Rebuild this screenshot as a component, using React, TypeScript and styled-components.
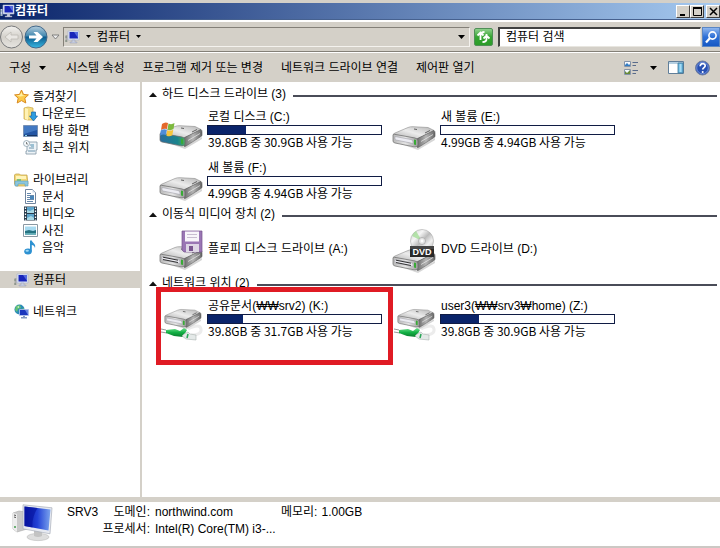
import React from "react";
import styled, { createGlobalStyle } from "styled-components";

const face = "#d4d0c8";
const navy = "#0a246a";

const GlobalStyle = createGlobalStyle`
  * { box-sizing: border-box; }
  body {
    margin: 0;
    background: #fff;
    color: #000;
    font: 12px/16px "Liberation Sans", "Noto Sans CJK KR", sans-serif;
  }
  button, input { font: inherit; color: inherit; }
`;

const Window = styled.div`
  display: flex;
  flex-direction: column;
  min-height: 100vh;
  overflow: hidden;
  background: ${face};
`;

/* Title bar */

const TitleBar = styled.header`
  display: flex;
  align-items: center;
  height: 17px;
  margin-top: 3px;
  background: linear-gradient(90deg, ${navy}, #a6caf0);
  border-bottom: 1px solid #46618f;
  overflow: hidden;
`;

const WindowTitle = styled.h1`
  flex: 1;
  margin: 0;
  color: #fff;
  font-size: 12px;
  line-height: 16px;
`;

const WindowButton = styled.button<{ $gap?: boolean }>`
  display: grid;
  place-items: center;
  width: 14px;
  height: 13px;
  margin: 0 0 0 ${(p) => (p.$gap ? 2 : 0)}px;
  padding: 0;
  background: ${face};
  border: 1px solid;
  border-color: #fff #404040 #404040 #fff;
`;

/* Address row */

const AddressRow = styled.nav`
  display: flex;
  align-items: center;
  height: 32px;
  border-top: 2px solid #fff;
  border-bottom: 1px solid #848078;
`;

const RoundButton = styled.button`
  display: grid;
  padding: 0;
  background: none;
  border: 0;
`;

const PlainButton = styled.button<{ $width?: number }>`
  display: flex;
  align-items: center;
  justify-content: center;
  gap: 6px;
  width: ${(p) => (p.$width ? `${p.$width}px` : "auto")};
  padding: 0;
  background: none;
  border: 0;
  white-space: nowrap;
`;

const MenuButton = styled(PlainButton)`
  justify-content: flex-start;
  gap: 8px;
`;

const AddressBox = styled.div`
  display: flex;
  flex: 1;
  align-items: center;
  gap: 4px;
  height: 20px;
  padding: 0 4px 0 1px;
  border: 1px solid;
  border-color: #848078 #f4f2ee #f4f2ee #848078;
`;

const Spacer = styled.div`
  flex: 1;
`;

const RefreshButton = styled.button`
  display: grid;
  place-items: center;
  width: 19px;
  height: 18px;
  margin: 0 5px 0 4px;
  padding: 0;
  background: linear-gradient(#8fd08c, #35a431 50%, #2c9c28);
  border: 1px solid #4f8f57;
  border-radius: 2px;
`;

const SearchBox = styled.div`
  display: flex;
  width: 222px;
  height: 20px;
`;

const SearchInput = styled.input`
  flex: 1;
  min-width: 0;
  padding: 0 0 0 6px;
  background: #fff;
  border: 1px solid;
  border-width: 2px 1px 1px 2px;
  border-color: #404040 #e8e6e0 #e8e6e0 #404040;
  border-radius: 0;
  &::placeholder { color: #000; opacity: 1; }
`;

const SearchButton = styled.button`
  display: grid;
  place-items: center;
  width: 18px;
  margin-left: 1px;
  padding: 0;
  background: linear-gradient(#8fb6ee, #2d6fd6 50%, #1658c4);
  border: 1px solid #5a86c4;
`;

/* Command bar */

const CommandBar = styled.div`
  display: flex;
  align-items: center;
  gap: 18px;
  height: 30px;
  padding: 0 10px 0 9px;
  border-top: 1px solid #fff;
`;

const ViewTools = styled.div`
  display: flex;
  align-items: center;
  gap: 11px;
  margin-left: auto;
`;

/* Folder tree */

const Body = styled.div`
  display: flex;
  flex: 1;
  background: #fff;
`;

const Tree = styled.nav`
  display: flex;
  flex-direction: column;
  gap: 15px;
  width: 142px;
  flex: none;
  padding-top: 6px;
  border-right: 2px solid ${face};
`;

const TreeGroup = styled.ul`
  margin: 0;
  padding: 0;
  list-style: none;
`;

const TreeLink = styled.a<{ $child?: boolean; $active?: boolean }>`
  display: flex;
  align-items: center;
  gap: 4px;
  height: 17px;
  padding-left: ${(p) => (p.$child ? 23 : 14)}px;
  background: ${(p) => (p.$active ? face : "transparent")};
  color: inherit;
  text-decoration: none;
`;

/* Drive listing */

const Listing = styled.main`
  flex: 1;
  min-width: 0;
  padding: 4px 3px 0 7px;
`;

const Group = styled.section`
  margin-bottom: 1px;
`;

const GroupHeading = styled.h2`
  display: flex;
  align-items: center;
  gap: 5px;
  height: 17px;
  margin: 0;
  font-size: 12px;
  font-weight: 400;
  line-height: 17px;
  white-space: nowrap;
  &::after {
    content: "";
    flex: 1;
    height: 2px;
    margin: 2px 0 0 2px;
    background: #4a4c58;
  }
`;

const Tiles = styled.div`
  display: grid;
  grid-template-columns: repeat(2, 233px);
  padding-left: 9px;
`;

const Tile = styled.article<{ $marked?: boolean }>`
  position: relative;
  display: flex;
  align-items: center;
  gap: 3px;
  height: 51px;
  &::after {
    content: "";
    display: ${(p) => (p.$marked ? "block" : "none")};
    position: absolute;
    inset: -5px -2px -22px -2px;
    border: 5px solid #e01b24;
  }
`;

const TileText = styled.div`
  width: 175px;
  white-space: nowrap;
`;

const TileName = styled.div`
  padding-left: 1px;
`;

const Usage = styled.div`
  height: 10px;
  border: 1px solid #101c44;
  background: #fff;
`;

const UsageFill = styled.div<{ $percent: number }>`
  width: ${(p) => p.$percent}%;
  height: 100%;
  background: ${navy};
`;

const Capacity = styled.div`
  padding-left: 1px;
  font-family: "Noto Sans CJK KR", sans-serif;
  line-height: 13px;
`;

/* Details pane */

const Details = styled.footer`
  display: flex;
  align-items: flex-start;
  height: 51px;
  padding: 2px 0 0 12px;
  background: #fff;
  border-top: 5px solid ${face};
  border-bottom: 2px solid #ccc8c4;
  white-space: nowrap;
`;

const HostName = styled.strong`
  width: 35px;
  margin-left: 13px;
  font-weight: 400;
  line-height: 17px;
`;

const Facts = styled.dl`
  display: grid;
  grid-template-columns: 48px 121px auto;
  column-gap: 5px;
  margin: 0;
  line-height: 17px;
  dd, dt { margin: 0; }
  dt { text-align: right; }
`;

const Fact = styled.div`
  display: flex;
  gap: 4px;
`;

const FactRow = styled.div`
  display: contents;
`;

/* Icons */

const Caret = () => (
  <svg width="7" height="4" viewBox="0 0 7 4" aria-hidden="true"><path d="M0 0h7L3.5 4z" fill="#000" /></svg>
);

const SmallCaret = () => (
  <svg width="5" height="3" viewBox="0 0 5 3" aria-hidden="true"><path d="M0 0h5L2.5 3z" fill="#000" /></svg>
);

const Collapse = () => (
  <svg width="8" height="5" viewBox="0 0 8 5" aria-hidden="true"><path d="M0 5h8L4 .5z" fill="#111" /></svg>
);

const ComputerIcon = ({ light = false }: { light?: boolean }) => (
  <svg width="15" height="14" viewBox="0 0 15 14" aria-hidden="true">
    <path d="M.5 5h2v7h-2z" fill={light ? "#c8d4ec" : "#a8a8a8"} />
    <path d="M.5 7h1M.5 11h1" stroke="#406040" />
    <path d="M3 1h11v9H3z" fill="#dfe5f5" stroke="#a4aecb" strokeWidth=".6" />
    <path d="M4.5 2H13v6.5H4.5z" fill="#1825ba" />
    <path d="M9 2h4v6z" fill="#5369dc" />
    <path d="M7 10h3v2h2v1H5v-1h2z" fill="#c7cfe2" stroke="#8d96af" strokeWidth=".4" />
  </svg>
);

const BackIcon = () => (
  <svg width="24" height="24" viewBox="0 0 24 24" aria-hidden="true">
    <defs><linearGradient id="back" x2="0" y2="1"><stop stopColor="#f3f2ef" /><stop offset=".5" stopColor="#d4d1cb" /><stop offset="1" stopColor="#e7e5e1" /></linearGradient></defs>
    <circle cx="11.5" cy="12" r="11" fill="url(#back)" stroke="#77787a" />
    <path d="M5 12l6-5v3h7v4h-7v3z" fill="#e9e7e3" stroke="#bdbab4" strokeWidth=".8" />
  </svg>
);

const ForwardIcon = () => (
  <svg width="24" height="24" viewBox="0 0 24 24" aria-hidden="true">
    <defs><linearGradient id="fwd" x2="0" y2="1"><stop stopColor="#b5cddd" /><stop offset=".45" stopColor="#4389b0" /><stop offset=".5" stopColor="#0c5a8c" /><stop offset="1" stopColor="#39b9e4" /></linearGradient></defs>
    <circle cx="12" cy="12" r="11" fill="url(#fwd)" stroke="#44698a" />
    <path d="M5 10.5h7.5L9.5 7h4l5.5 5-5.5 5h-4l3-3.500H5z" fill="#fff" />
  </svg>
);

const HistoryIcon = () => (
  <svg width="9" height="6" viewBox="0 0 9 6" aria-hidden="true"><path d="M1 1h7L4.500 5z" fill="#eee" stroke="#777" strokeWidth=".9" /></svg>
);

const RefreshIcon = () => (
  <svg width="17" height="14" viewBox="0 0 17 14" fill="none" stroke="#fff" strokeWidth="1.8" aria-hidden="true">
    <path d="M5.500 10V5c0-2 1.500-3 4-3M2.500 5.500l3-3 3 3M11.500 4v5c0 2-1.500 3-4 3M8.500 8.500l3-3 3 3" />
  </svg>
);

const SearchIcon = () => (
  <svg width="14" height="14" viewBox="0 0 14 14" fill="none" stroke="#fff" aria-hidden="true">
    <circle cx="8.500" cy="5.500" r="3.600" strokeWidth="1.600" /><path d="M6 8l-4 4.500" strokeWidth="2.200" />
  </svg>
);

const ViewIcon = () => (
  <svg width="16" height="16" viewBox="0 0 16 16" aria-hidden="true">
    <path d="M1.500 1.500h6v5h-6zM1.500 9.500h6v5h-6z" fill="#f5f9ff" stroke="#8493a8" />
    <path d="M2 5l2-2 2 2 1-1v2H2z" fill="#347dc4" />
    <path d="M2 11l2 2 3-3v4H2z" fill="#688a38" />
    <path d="M9.500 2.500H15M9.500 5.500H13M9.500 10.500H15M9.500 13.500H13" stroke="#596b8b" />
  </svg>
);

const PreviewIcon = () => (
  <svg width="16" height="15" viewBox="0 0 16 15" aria-hidden="true">
    <path d="M.5 1.500h15v12H.5z" fill="#fff" stroke="#607e99" />
    <path d="M1 2h14v2H1z" fill="#b5cfe1" />
    <path d="M10 3h5v10h-5z" fill="#65b5df" stroke="#437897" strokeWidth=".8" />
    <path d="M11.500 4h2v8h-2z" fill="#a7dcf4" />
  </svg>
);

const HelpIcon = () => (
  <svg width="15" height="16" viewBox="0 0 15 16" aria-hidden="true">
    <circle cx="7.500" cy="8" r="7" fill="#2850b2" stroke="#6f7d9d" />
    <circle cx="7.500" cy="8" r="5.800" fill="none" stroke="#8fa9e8" strokeWidth=".7" />
    <path d="M5.200 6.300c0-3.600 5-3.300 5-.5 0 1.800-2.500 1.800-2.500 3.800" fill="none" stroke="#fff" strokeWidth="1.700" />
    <circle cx="7.700" cy="12" r="1" fill="#fff" />
  </svg>
);

const StarIcon = () => (
  <svg width="15" height="15" viewBox="0 0 15 15" aria-hidden="true">
    <path d="M7.500 1l2 4.400 4.900.5-3.600 3.300 1 4.800-4.300-2.400L3.200 14l1-4.800L.6 5.900l4.900-.5z" fill="#fcca4b" stroke="#d98a21" />
    <path d="M7.500 3l1 3.300 3 .5-5.500.7-3.500-1L6 6z" fill="#fff1a5" />
  </svg>
);

const DownloadIcon = () => (
  <svg width="15" height="16" viewBox="0 0 15 16" aria-hidden="true">
    <path d="M1 2l4-1 5 1v12H5l-4-1z" fill="#f4dc83" stroke="#c9a544" strokeWidth=".7" />
    <path d="M2 2l3 1v11l-3-1z" fill="#fff2b5" />
    <path d="M8.500 6h4v4h2l-4 5-4-5h2z" fill="#2d9de0" stroke="#1766a8" strokeWidth=".7" />
  </svg>
);

const DesktopIcon = () => (
  <svg width="15" height="14" viewBox="0 0 15 14" aria-hidden="true">
    <path d="M.5 1.500h14v11H.5z" fill="#2456a4" stroke="#7891b4" />
    <path d="M1 2h13v4L1 10z" fill="#4379c2" /><path d="M1 11h13v1H1z" fill="#173565" />
    <path d="M2 11.500h2" stroke="#8ed7ed" />
  </svg>
);

const RecentIcon = () => (
  <svg width="15" height="15" viewBox="0 0 15 15" aria-hidden="true">
    <path d="M4 2h10v8h-1v4H3v-3h1z" fill="#edf3f7" stroke="#8095a3" strokeWidth=".8" />
    <path d="M7 5h4M6 8h5M5 11h7" stroke="#6d94ad" /><path d="M8 4v3h3V4z" fill="#9bc0d3" />
    <circle cx="3.500" cy="3.500" r="3" fill="#f6fafc" stroke="#8095a3" strokeWidth=".7" />
    <path d="M3.500 2v2h1.500" fill="none" stroke="#555" strokeWidth=".7" />
  </svg>
);

const LibraryIcon = () => (
  <svg width="15" height="14" viewBox="0 0 15 14" aria-hidden="true">
    <path d="M.5 2l1-1h4l1 1h6.500l1 9-2 2h-10L.5 11z" fill="#f2d777" stroke="#bd9c44" strokeWidth=".7" />
    <path d="M2 3h10v3H2z" fill="#fff4b9" /><path d="M3 6h4v4H3z" fill="#7fc27a" />
    <path d="M1 8h13v5h-3v-2H4v2H1z" fill="#8bc6de" stroke="#5d9fb9" strokeWidth=".6" />
  </svg>
);

const DocumentIcon = () => (
  <svg width="15" height="15" viewBox="0 0 15 15" aria-hidden="true">
    <path d="M2.500.5h7l3 3v11h-10z" fill="#fff" stroke="#71859e" />
    <path d="M9.500.5v3h3z" fill="#ccd8e8" /><path d="M4 4.500h4M4 6.500h7M4 8.500h3M4 10.500h7M4 12.500h6" stroke="#6688ac" />
    <path d="M7 7h4v3H7z" fill="#4684b8" />
  </svg>
);

const VideoIcon = () => (
  <svg width="15" height="15" viewBox="0 0 15 15" aria-hidden="true">
    <path d="M1 .5h13v14H1z" fill="#273b4c" /><path d="M4 1h7v6H4zM4 8h7v6H4z" fill="#5da6ce" />
    <path d="M4 4l3 1 4-2v4H4zM4 12l4-2 3 2v2H4z" fill="#a9d9e6" />
    <path d="M2.500 1.500v13M12.500 1.500v13" stroke="#fff" strokeWidth="1.300" strokeDasharray="1.500 1.500" />
  </svg>
);

const PictureIcon = () => (
  <svg width="15" height="13" viewBox="0 0 15 13" aria-hidden="true">
    <path d="M.5.5h14v12H.5z" fill="#fff" stroke="#8a98a2" />
    <path d="M2 2.500h11v8H2z" fill="#a8daf0" /><path d="M2 7l4-1 4 1 3-1v4.500H2z" fill="#267382" />
    <path d="M2 9h11v1.500H2z" fill="#62aeb6" />
  </svg>
);

const MusicIcon = () => (
  <svg width="15" height="15" viewBox="0 0 15 15" aria-hidden="true">
    <ellipse cx="5" cy="11.500" rx="3.800" ry="3" fill="#2d91d1" />
    <path d="M7 .5h1.800c.3 2.500 4.500 3 3.200 7.500-.4-2-1.700-2.700-3.200-3v6.500H7z" fill="#2d91d1" />
    <ellipse cx="4.200" cy="10.700" rx="1.700" ry="1" fill="#a0d9f6" />
  </svg>
);

const NetworkIcon = () => (
  <svg width="15" height="15" viewBox="0 0 15 15" aria-hidden="true">
    <circle cx="5.500" cy="5.500" r="5" fill="#2b8cb7" />
    <path d="M2 2l4-1 1 3-3 1-1 3-2-2zM6 6l4-2v3L7 9z" fill="#65c272" /><path d="M3 3l2-1v2z" fill="#d6f2da" />
    <path d="M5.500 5.500h9v6h-9z" fill="#1a36bd" stroke="#b6c7ed" strokeWidth=".8" />
    <path d="M11 6h3v5z" fill="#6987e2" /><path d="M9 12h2v1h2v1.500H7V13h2z" fill="#8299bf" />
  </svg>
);

const DriveDefs = () => (
  <svg width="0" height="0" display="block" aria-hidden="true">
    <defs>
      <linearGradient id="top" x1="0" y1="1" x2="1" y2="0"><stop stopColor="#a9a9a9" /><stop offset=".5" stopColor="#ececec" /><stop offset="1" stopColor="#b3b3b3" /></linearGradient>
      <linearGradient id="front" x2="1"><stop stopColor="#b8b8b8" /><stop offset=".5" stopColor="#e6e6e6" /><stop offset="1" stopColor="#9a9a9a" /></linearGradient>
      <linearGradient id="side" x2="1"><stop stopColor="#6c6c6c" /><stop offset=".5" stopColor="#b5b5b5" /><stop offset="1" stopColor="#666" /></linearGradient>
      <linearGradient id="disc" x2="1" y2="1"><stop stopColor="#ccc" /><stop offset=".3" stopColor="#f5f5f5" /><stop offset=".5" stopColor="#bbb" /><stop offset=".7" stopColor="#f1f1f1" /><stop offset="1" stopColor="#aaa" /></linearGradient>
      <linearGradient id="cable" x2="0" y2="1"><stop stopColor="#6ee08d" /><stop offset=".5" stopColor="#13b045" /><stop offset="1" stopColor="#087b2c" /></linearGradient>
      <linearGradient id="teal" x2="1"><stop stopColor="#2b6c9c" /><stop offset=".7" stopColor="#1b858d" /><stop offset="1" stopColor="#4daa63" /></linearGradient>
    </defs>
  </svg>
);

const DriveBody = ({ slot = false, teal = false }: { slot?: boolean; teal?: boolean }) => (
  <g>
    <path d="M3 17l22 6 18-10v2L26 25z" fill="#bbb" opacity=".6" />
    <path d="M1.500 9.500Q1 9 3 8L16 2.500Q18 1.500 21 1.700L36 2.500 42 5.500 26 14z" fill="url(#top)" stroke="#8c8c8c" strokeWidth=".6" />
    <path d="M25.500 13.500L42 5.500Q43 6 43 8v3q0 1-1 1.600L27 22q-2 1-2 0z" fill="url(#side)" stroke="#555" strokeWidth=".6" />
    <path d="M1 10q0-1 1.500-.7L23 13q3 .5 3 3v4q0 2.500-3 2L3 18q-2-.5-2-2z" fill={teal ? "url(#teal)" : "url(#front)"} stroke="#6a6a6a" strokeWidth=".7" />
    {!teal && <path d="M3 11.500l16 3q2 .5 2 2.500v1.500L4 15q-1-.3-1-1.500z" fill="#ececf2" stroke="#a1a1aa" strokeWidth=".6" />}
    {slot && <path d="M4 12.200l15 3M4 14.500l15 3" stroke="#333" strokeWidth="1" />}
    <path d="M22 14.500l2 .5v5l-2-.5z" fill="#38aa35" />
    <path d="M22 4l3 .5M33 8l5-2.500" stroke="#555" strokeWidth=".9" />
    <path d="M29 16.500L41 9.500" stroke="#eee" strokeWidth=".7" />
  </g>
);

type Kind = "system" | "plain" | "floppy" | "dvd" | "network";

const DriveIcon = ({ kind }: { kind: Kind }) => (
  <svg width="46" height="52" viewBox="0 0 46 52" aria-hidden="true">
    {kind === "system" && (
      <>
        <g transform="translate(1 21)"><DriveBody teal /></g>
        <path d="M4 21q3-2.500 6-1l-1 6q-3-1-6 1z" fill="#e4682b" />
        <path d="M10.500 20.500q3 1.500 6-.5l-1 6q-3 2-6 .5z" fill="#7db93e" />
        <path d="M2.700 27.500q3-2 6-.7L8 32q-3-1.500-6 .7z" fill="#4f8dd8" />
        <path d="M9.300 27.200q3 1.500 6-.4l-1 5.500q-3 2-6 .2z" fill="#f6c53c" />
      </>
    )}
    {kind === "plain" && <g transform="translate(1 22)"><DriveBody /></g>}
    {kind === "floppy" && (
      <>
        <g transform="translate(1 22)"><DriveBody slot /></g>
        <path d="M24 8h20v21H26l-2-2z" fill="#9a76b4" stroke="#76558e" strokeWidth=".7" />
        <path d="M27 8.500h14v10H27z" fill="#f8f5fa" /><path d="M29 11.500h10M29 14.500h10" stroke="#c9bdd1" />
        <path d="M28 21h13v8H28z" fill="#ded6e5" /><path d="M31 23h4v5h-4z" fill="#79558f" />
      </>
    )}
    {kind === "dvd" && (
      <>
        <g transform="translate(1 25)"><DriveBody slot /></g>
        <circle cx="31" cy="18" r="11.500" fill="url(#disc)" stroke="#aaa" strokeWidth=".6" />
        <path d="M31 18l-10-5q2-4 4-5z" fill="#a5df99" opacity=".8" />
        <circle cx="31" cy="18" r="3.500" fill="#e5e5e5" stroke="#999" strokeWidth=".6" /><circle cx="31" cy="18" r="1.400" fill="#fff" />
        <path d="M19 23h24v11H19z" fill="#292929" /><path d="M19 23h24v3H19z" fill="#444" />
        <text x="31" y="32" textAnchor="middle" fill="#fff" fontFamily="Liberation Sans, sans-serif" fontSize="9" fontWeight="700">DVD</text>
      </>
    )}
    {kind === "network" && (
      <>
        <path d="M30 37q12-6 13 0t-10 6" fill="none" stroke="#ececec" strokeWidth="3" />
        <g transform="translate(6 16) scale(.86)"><DriveBody /></g>
        <path d="M3 37l5 1M3 40l6 1" stroke="#999" />
        <path d="M8 38l9-1 5 2 4-3 3 2-4 7-9-1-8-3z" fill="url(#cable)" />
        <path d="M26 42l4-2 2 2 6 1v5l-10-1-4-3z" fill="#e4e9e8" stroke="#aab3b0" strokeWidth=".6" />
        <path d="M30 42l-1 4" stroke="#2aa657" strokeWidth="1.500" />
      </>
    )}
  </svg>
);

const HostIcon = () => (
  <svg width="42" height="38" viewBox="0 0 42 38" aria-hidden="true">
    <defs><linearGradient id="screen" x2="1"><stop stopColor="#0713a4" /><stop offset=".5" stopColor="#2342d6" /><stop offset="1" stopColor="#7ba4ed" /></linearGradient></defs>
    <path d="M1 9l6-2 8 1v17l-10 3-4-3z" fill="#c9c9c9" stroke="#aaa" strokeWidth=".6" />
    <path d="M1 9l4 1v18l-4-3z" fill="#ededed" /><path d="M2 11l2 .5M2 13l2 .5" stroke="#555" /><circle cx="3" cy="23" r="1" fill="#439c4f" />
    <ellipse cx="26" cy="33" rx="11" ry="3.600" fill="#dedede" stroke="#b8b8b8" strokeWidth=".6" />
    <path d="M22 25l8 1v6q-4 2-8 0z" fill="#c3c3c3" />
    <path d="M11 .8l29 3-2 26-27-5z" fill="#e7eaf1" stroke="#a9afba" strokeWidth=".7" />
    <path d="M12.500 2.500l26 3-2 21-24-4.500z" fill="url(#screen)" />
    <path d="M12.500 2.500l13 1.500q-6 10-5 19.500l-8-1.500z" fill="#0614a0" opacity=".65" />
  </svg>
);

/* Data */

type TreeItem = { label: string; icon: React.ReactNode; child?: boolean; active?: boolean };

const tree: TreeItem[][] = [
  [
    { label: "즐겨찾기", icon: <StarIcon /> },
    { label: "다운로드", icon: <DownloadIcon />, child: true },
    { label: "바탕 화면", icon: <DesktopIcon />, child: true },
    { label: "최근 위치", icon: <RecentIcon />, child: true },
  ],
  [
    { label: "라이브러리", icon: <LibraryIcon /> },
    { label: "문서", icon: <DocumentIcon />, child: true },
    { label: "비디오", icon: <VideoIcon />, child: true },
    { label: "사진", icon: <PictureIcon />, child: true },
    { label: "음악", icon: <MusicIcon />, child: true },
  ],
  [{ label: "컴퓨터", icon: <ComputerIcon />, active: true }],
  [{ label: "네트워크", icon: <NetworkIcon /> }],
];

type Drive = { name: string; kind: Kind; used?: number; capacity?: string; marked?: boolean };

const groups: { title: string; drives: Drive[] }[] = [
  {
    title: "하드 디스크 드라이브 (3)",
    drives: [
      { name: "로컬 디스크 (C:)", kind: "system", used: 22, capacity: "39.8GB 중 30.9GB 사용 가능" },
      { name: "새 볼륨 (E:)", kind: "plain", used: 0, capacity: "4.99GB 중 4.94GB 사용 가능" },
      { name: "새 볼륨 (F:)", kind: "plain", used: 0, capacity: "4.99GB 중 4.94GB 사용 가능" },
    ],
  },
  {
    title: "이동식 미디어 장치 (2)",
    drives: [
      { name: "플로피 디스크 드라이브 (A:)", kind: "floppy" },
      { name: "DVD 드라이브 (D:)", kind: "dvd" },
    ],
  },
  {
    title: "네트워크 위치 (2)",
    drives: [
      { name: "공유문서(₩₩srv2) (K:)", kind: "network", used: 20, capacity: "39.8GB 중 31.7GB 사용 가능", marked: true },
      { name: "user3(₩₩srv3₩home) (Z:)", kind: "network", used: 22, capacity: "39.8GB 중 30.9GB 사용 가능" },
    ],
  },
];

const commands = ["시스템 속성", "프로그램 제거 또는 변경", "네트워크 드라이브 연결", "제어판 열기"];

export default function App() {
  return (
    <Window>
      <GlobalStyle />
      <DriveDefs />
      <TitleBar>
        <ComputerIcon light />
        <WindowTitle>컴퓨터</WindowTitle>
        <WindowButton aria-label="최소화"><svg width="9" height="9"><path d="M1 7h5v2H1z" /></svg></WindowButton>
        <WindowButton aria-label="최대화"><svg width="9" height="9"><path d="M.5 1h8v7.500h-8z" fill="none" stroke="#000" /><path d="M0 0h9v2H0z" /></svg></WindowButton>
        <WindowButton $gap aria-label="닫기"><svg width="9" height="9"><path d="M1 1l7 7M8 1L1 8" stroke="#000" strokeWidth="1.500" /></svg></WindowButton>
      </TitleBar>

      <AddressRow>
        <RoundButton aria-label="뒤로"><BackIcon /></RoundButton>
        <RoundButton aria-label="앞으로"><ForwardIcon /></RoundButton>
        <PlainButton $width={15} aria-label="최근 페이지"><HistoryIcon /></PlainButton>
        <AddressBox>
          <ComputerIcon />
          <PlainButton $width={9} aria-label="위치 선택"><SmallCaret /></PlainButton>
          <PlainButton>컴퓨터 <SmallCaret /></PlainButton>
          <Spacer />
          <PlainButton aria-label="이전 위치"><Caret /></PlainButton>
        </AddressBox>
        <RefreshButton aria-label="새로 고침"><RefreshIcon /></RefreshButton>
        <SearchBox>
          <SearchInput type="search" aria-label="컴퓨터 검색" placeholder="컴퓨터 검색" />
          <SearchButton aria-label="검색"><SearchIcon /></SearchButton>
        </SearchBox>
      </AddressRow>

      <CommandBar>
        <MenuButton $width={39}>구성 <Caret /></MenuButton>
        {commands.map((label) => <PlainButton key={label}>{label}</PlainButton>)}
        <ViewTools>
          <PlainButton aria-label="보기 변경"><ViewIcon /></PlainButton>
          <PlainButton aria-label="추가 옵션"><Caret /></PlainButton>
          <PlainButton aria-label="미리 보기 창"><PreviewIcon /></PlainButton>
          <PlainButton aria-label="도움말"><HelpIcon /></PlainButton>
        </ViewTools>
      </CommandBar>

      <Body>
        <Tree aria-label="탐색">
          {tree.map((items) => (
            <TreeGroup key={items[0].label}>
              {items.map((item) => (
                <li key={item.label}>
                  <TreeLink href="#" $child={item.child} $active={item.active}>{item.icon}{item.label}</TreeLink>
                </li>
              ))}
            </TreeGroup>
          ))}
        </Tree>
        <Listing>
          {groups.map((group) => (
            <Group key={group.title}>
              <GroupHeading><Collapse />{group.title}</GroupHeading>
              <Tiles>
                {group.drives.map((drive) => (
                  <Tile key={drive.name} $marked={drive.marked}>
                    <DriveIcon kind={drive.kind} />
                    <TileText>
                      <TileName>{drive.name}</TileName>
                      {drive.capacity && (
                        <>
                          <Usage><UsageFill $percent={drive.used ?? 0} /></Usage>
                          <Capacity>{drive.capacity}</Capacity>
                        </>
                      )}
                    </TileText>
                  </Tile>
                ))}
              </Tiles>
            </Group>
          ))}
        </Listing>
      </Body>

      <Details>
        <HostIcon />
        <HostName>SRV3</HostName>
        <Facts>
          <FactRow>
            <dt>도메인:</dt>
            <dd>northwind.com</dd>
          </FactRow>
          <Fact>
            <dt>메모리:</dt>
            <dd>1.00GB</dd>
          </Fact>
          <FactRow>
            <dt>프로세서:</dt>
            <dd>Intel(R) Core(TM) i3-...</dd>
          </FactRow>
        </Facts>
      </Details>
    </Window>
  );
}
